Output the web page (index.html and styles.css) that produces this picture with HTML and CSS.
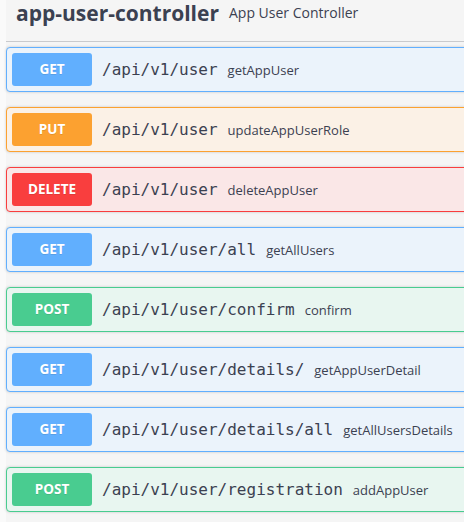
FILE: index.html
```html
<!DOCTYPE html>
<html>
<head>
<meta charset="utf-8">
<link rel="stylesheet" href="styles.css">
</head>
<body>
<section class="tag-section">
  <h4 class="tag">
    <span class="tag-name">app-user-controller</span>
    <small class="tag-desc">App User Controller</small>
  </h4>
  <div class="opblock get"><span class="method">GET</span><span class="path">/api/v1/user</span><span class="desc">getAppUser</span></div>
  <div class="opblock put"><span class="method">PUT</span><span class="path">/api/v1/user</span><span class="desc">updateAppUserRole</span></div>
  <div class="opblock delete"><span class="method">DELETE</span><span class="path">/api/v1/user</span><span class="desc">deleteAppUser</span></div>
  <div class="opblock get"><span class="method">GET</span><span class="path">/api/v1/user/all</span><span class="desc">getAllUsers</span></div>
  <div class="opblock post"><span class="method">POST</span><span class="path">/api/v1/user/confirm</span><span class="desc">confirm</span></div>
  <div class="opblock get"><span class="method">GET</span><span class="path">/api/v1/user/details/</span><span class="desc">getAppUserDetail</span></div>
  <div class="opblock get"><span class="method">GET</span><span class="path">/api/v1/user/details/all</span><span class="desc">getAllUsersDetails</span></div>
  <div class="opblock post"><span class="method">POST</span><span class="path">/api/v1/user/registration</span><span class="desc">addAppUser</span></div>
</section>
</body>
</html>
```
FILE: styles.css
```css
html, body {
  margin: 0;
  padding: 0;
  background: #fafafa;
  overflow: hidden;
  height: 522px;
}
body {
  font-family: "Open Sans", sans-serif;
  color: #3b4151;
}
.tag-section {
  margin-left: 6px;
  width: 520px;
  background: #f5f5f5;
  min-height: 522px;
}
.tag {
  margin: 0 0 5px 0;
  display: flex;
  align-items: center;
  padding: 1px 20px 16px 10px;
  border-bottom: 1px solid #c9cacd;
  font-size: 21px;
  line-height: 24px;
  font-weight: 700;
  color: #3b4151;
}
.tag-desc {
  font-size: 14px;
  font-weight: 400;
  line-height: 18px;
  padding: 0 10px;
}
.opblock {
  display: flex;
  align-items: center;
  padding: 5px;
  margin: 0 0 15px 0;
  border: 1px solid;
  border-radius: 4px;
  box-shadow: 0 0 3px rgba(0,0,0,.19);
}
.method {
  min-width: 80px;
  box-sizing: border-box;
  padding: 6px 15px;
  text-align: center;
  font-size: 13.5px;
  line-height: 21px;
  font-weight: 700;
  color: #fff;
  border-radius: 3px;
  text-shadow: 0 1px 0 rgba(0,0,0,.1);
}
.path {
  font-family: "DejaVu Sans Mono", monospace;
  font-size: 16px;
  font-weight: 400;
  padding: 0 10px;
  color: #3b4151;
}
.desc {
  font-size: 13px;
  color: #3b4151;
}
.get { background: #ebf3fb; border-color: #61affe; }
.get .method { background: #61affe; }
.put { background: #fbf1e6; border-color: #fca130; }
.put .method { background: #fca130; }
.delete { background: #fae7e7; border-color: #f93e3e; }
.delete .method { background: #f93e3e; }
.post { background: #e8f6f0; border-color: #49cc90; }
.post .method { background: #49cc90; }
```
